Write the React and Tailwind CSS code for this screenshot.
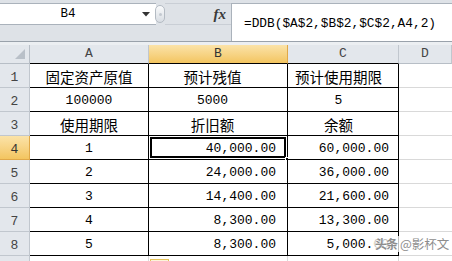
import React from "react";

const MONO = "font-['Liberation_Mono','Noto_Sans_CJK_SC',monospace]";
const CJK = "font-['Noto_Sans_CJK_SC',sans-serif] text-[14.5px]";

const rows = [
    ["固定资产原值", "预计残值", "预计使用期限", "c", "c", "c", true],
    ["100000", "5000", "5", "c", "c", "c", false],
    ["使用期限", "折旧额", "余额", "c", "c", "c", true],
    ["1", "40,000.00", "60,000.00", "c", "r", "r", false],
    ["2", "24,000.00", "36,000.00", "c", "r", "r", false],
    ["3", "14,400.00", "21,600.00", "c", "r", "r", false],
    ["4", "8,300.00", "13,300.00", "c", "r", "r", false],
    ["5", "8,300.00", "5,000.00", "c", "r", "r", false],
];

function Cell({ text, align, cjk, pr, children }) {
    return (
        <div
            className={`relative h-[24px] border-r border-b border-black bg-white flex items-center pt-[2px] text-black ${
                align === "r" ? "justify-end" : "justify-center"
            } ${pr}`}
        >
            <span className={cjk ? CJK : `${MONO} text-[13px]`}>{text}</span>
            {children}
        </div>
    );
}

export default function App() {
    return (
        <div className="relative w-[452px] h-[261px] overflow-hidden bg-white">
            {/* Formula bar */}
            <div className="h-[42px] bg-[#dee2e7] pt-[3px] flex border-b border-[#9aa2ab]">
                <div className="w-[156px] h-[22px] bg-white border-y border-[#aab2bb] flex items-center">
                    <span className={`w-[136px] text-center ${MONO} text-[12.5px] text-black pt-[1px]`}>B4</span>
                    <svg width="8" height="5" viewBox="0 0 8 5" className="ml-[6px]">
                        <path d="M0 0H8L4 4.5Z" fill="#333" />
                    </svg>
                </div>
                <div className="w-[10px] h-[22px] flex items-center -ml-[1px]">
                    <div className="w-[10px] h-[18px] rounded-full border border-[#b4bbc3] bg-gradient-to-b from-[#fafbfc] to-[#d8dde3] flex items-center justify-center">
                        <div className="w-[3px] h-[3px] rounded-full bg-[#c3c9d0]" />
                    </div>
                </div>
                <div className="w-[66px] h-[22px] border-y border-[#c9ced5] flex items-center justify-end pr-[5px]">
                    <span className="font-['Liberation_Serif',serif] italic font-bold text-[15px] text-[#3a3a3a] leading-none">fx</span>
                </div>
                <div className="flex-1 h-[38px] bg-white border-l border-t border-[#aab2bb] pl-[12px] pt-[5px]">
                    <span className={`${MONO} text-[12.8px] text-black`}>=DDB($A$2,$B$2,$C$2,A4,2)</span>
                </div>
            </div>
            <div className="h-[3px] bg-[#eceff2]" />

            {/* Sheet grid */}
            <div className="grid grid-cols-[30px_119px_139px_111px_1fr]">
                {/* header */}
                <div className="h-[19px] bg-[#e3e7ec] border-r border-b border-[#b7bec6] relative">
                    <svg width="10" height="10" viewBox="0 0 10 10" className="absolute right-[4px] bottom-[4px]">
                        <path d="M10 0V10H0Z" fill="#b9c0c8" />
                    </svg>
                </div>
                {["A", "B", "C", "D"].map((c) => (
                    <div
                        key={c}
                        className={`h-[19px] flex items-center justify-center border-r ${MONO} text-[13px] ${
                            c === "B"
                                ? "bg-gradient-to-b from-[#fbe3a8] to-[#f3c55f] border-[#e0a848] text-[#333]"
                                : "bg-[#e3e7ec] border-[#c1c7ce] text-[#444]"
                        } ${c === "D" ? "border-b border-b-[#b7bec6]" : "border-b border-b-black"}`}
                    >
                        {c}
                    </div>
                ))}

                {rows.map((r, i) => {
                    const n = i + 1;
                    const sel = n === 4;
                    return (
                        <React.Fragment key={n}>
                            <div
                                className={`h-[24px] flex items-center justify-center pt-[4px] border-r border-b ${MONO} text-[13px] ${
                                    sel
                                        ? "bg-gradient-to-b from-[#fbe3a8] to-[#f3c55f] border-[#e0a848] text-[#333]"
                                        : "bg-[#e3e7ec] border-[#c1c7ce] text-[#444]"
                                }`}
                            >
                                {n}
                            </div>
                            <Cell text={r[0]} align={r[3]} cjk={r[6]} />
                            <Cell text={r[1]} align={r[4]} cjk={r[6]} pr="pr-[11px]">
                                {sel && (
                                    <>
                                        <div className="absolute top-[1px] left-[1px] right-[1px] bottom-[1px] border-2 border-black" />
                                        <div className="absolute -right-[4px] -bottom-[4px] w-[6px] h-[6px] bg-black border border-white" />
                                    </>
                                )}
                            </Cell>
                            <Cell text={r[2]} align={r[5]} cjk={r[6]} pr="pr-[9px]" />
                            <div className="h-[24px] border-b border-[#d9d9d9] bg-white" />
                        </React.Fragment>
                    );
                })}

                {/* partial row 9 */}
                <div className="h-[24px] bg-[#e3e7ec] border-r border-[#c1c7ce]" />
                <div className="h-[24px] border-r border-[#d9d9d9]" />
                <div className="h-[24px] border-r border-[#d9d9d9] relative">
                    <div className="absolute top-[3px] left-[1px] w-[19px] h-[18px] border border-[#e6c35a] bg-[#fdf5d9] p-[3px]">
                        <div className="w-full h-full border border-[#2a3f9a] bg-[#dfe6fb]" />
                    </div>
                </div>
                <div className="h-[24px] border-r border-[#d9d9d9]" />
                <div className="h-[24px]" />
            </div>

            {/* watermark */}
            <div className="absolute left-[374px] top-[236px] h-[16px] px-[1px] flex items-center gap-[3px] bg-white/75 text-[#8d8d8d] font-['Noto_Sans_CJK_SC',sans-serif] [text-shadow:0_0_2px_#fff]">
                <span className="text-[12px] font-bold tracking-[-1px]">头条</span>
                <span className="text-[12.5px]">@影杯文</span>
            </div>
        </div>
    );
}
